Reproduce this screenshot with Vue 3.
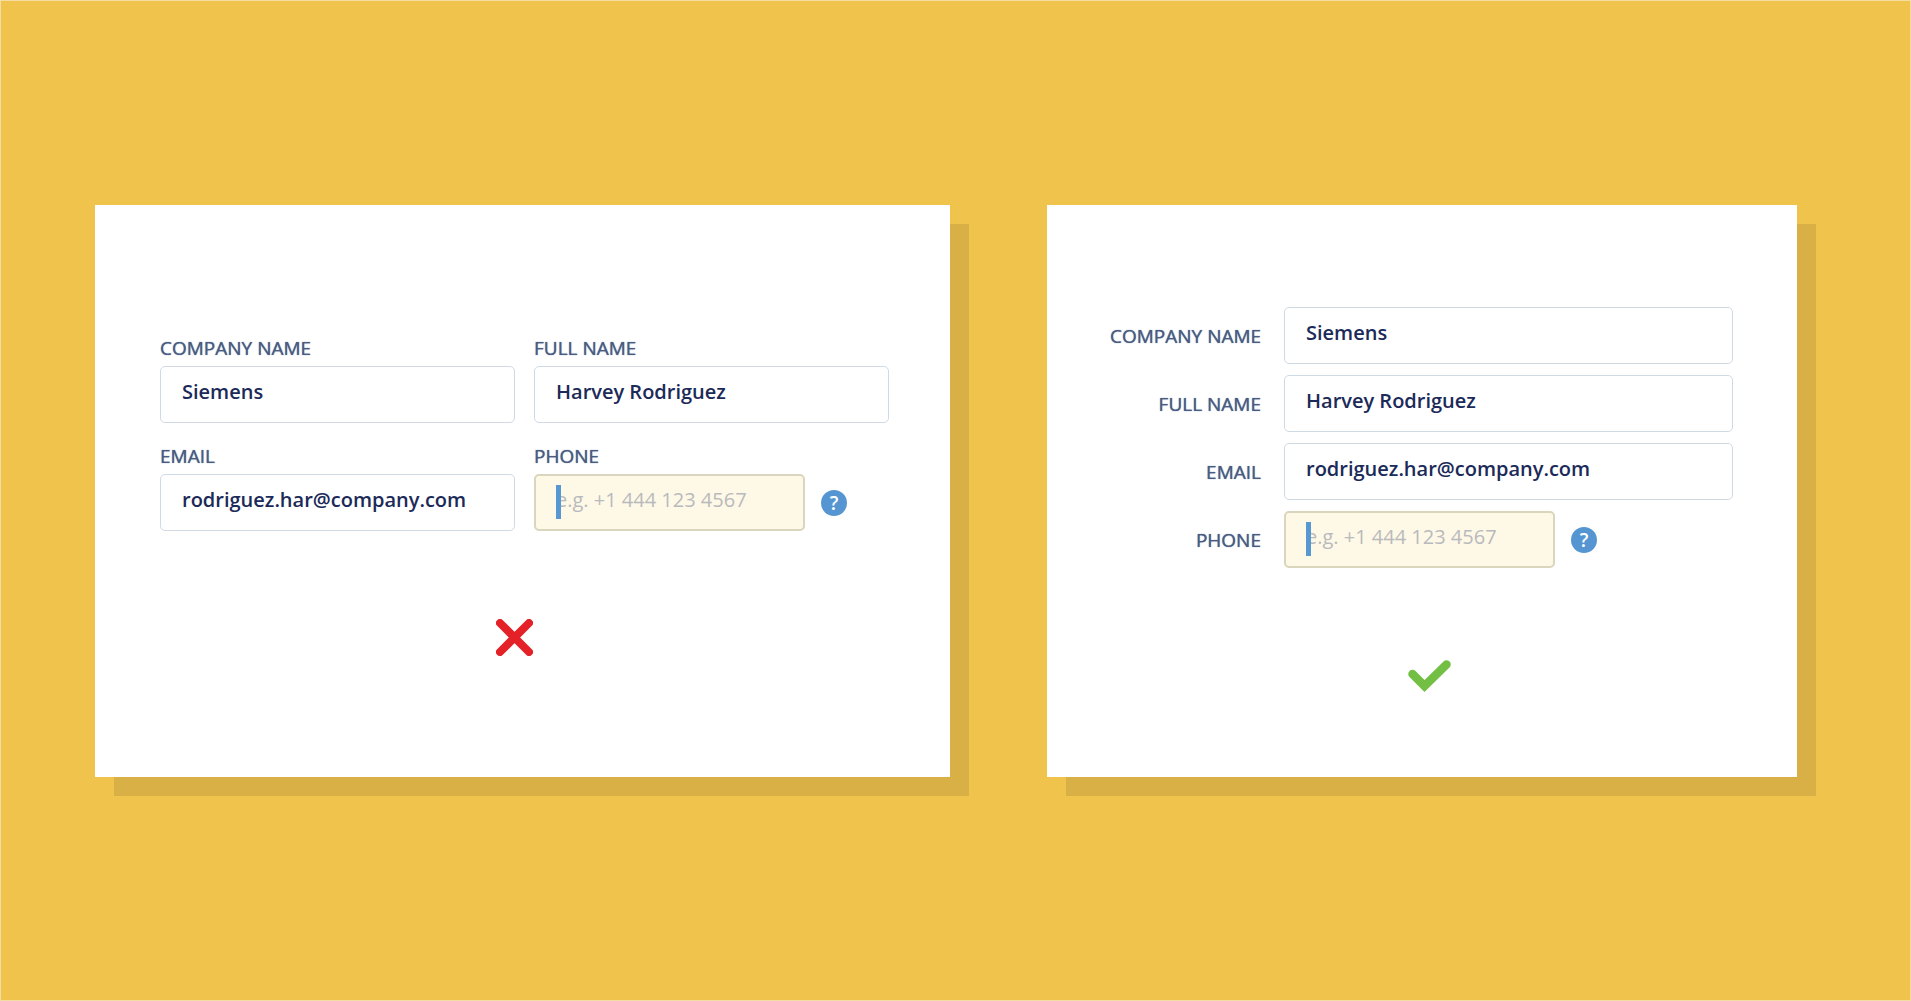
<script setup>
import { ref } from 'vue'

const fields = ref([
  { key: 'company', label: 'COMPANY NAME', type: 'text', value: 'Siemens' },
  { key: 'name', label: 'FULL NAME', type: 'text', value: 'Harvey Rodriguez' },
  { key: 'email', label: 'EMAIL', type: 'email', value: 'rodriguez.har@company.com' },
  { key: 'phone', label: 'PHONE', type: 'tel', value: '', placeholder: 'e.g. +1 444 123 4567', active: true },
])

const cards = [
  { id: 'columns', verdict: 'wrong' },
  { id: 'stacked', verdict: 'right' },
]
</script>

<template>
  <main class="page">
    <section v-for="card in cards" :key="card.id" class="card" :class="card.id">
      <form class="form" autocomplete="off" @submit.prevent>
        <div v-for="field in fields" :key="field.key" class="field">
          <label class="label" :for="card.id + '-' + field.key">{{ field.label }}</label>
          <div class="control">
            <div class="box" :class="{ active: field.active }">
              <input
                :id="card.id + '-' + field.key"
                v-model="field.value"
                class="input"
                :type="field.type"
                :placeholder="field.placeholder"
                spellcheck="false"
              />
              <span v-if="field.active" class="caret"></span>
            </div>
            <button v-if="field.active" class="help" type="button">?</button>
          </div>
        </div>
      </form>
      <div class="verdict">
        <svg v-if="card.verdict === 'wrong'" width="37" height="37" viewBox="0 0 37 37" aria-hidden="true">
          <path d="M4 4 33 33M33 4 4 33" fill="none" stroke="#e52128" stroke-width="8" stroke-linecap="round" />
        </svg>
        <svg v-else width="43" height="32" viewBox="0 0 43 32" aria-hidden="true">
          <path d="M4.500 14 16.500 26 38.500 4.500" fill="none" stroke="#73bf44" stroke-width="8.500" stroke-linecap="round" />
        </svg>
      </div>
    </section>
  </main>
</template>

<style>
body {
  margin: 0;
}
</style>

<style scoped>
.page {
  box-sizing: border-box;
  min-height: 100vh;
  padding: 204px 113px 204px 94px;
  border: 1px solid #f4dda2;
  background: #f0c44c;
  display: grid;
  grid-template-columns: 855fr 750fr;
  align-items: start;
  gap: 97px;
  font-family: "Open Sans", "Noto Sans", sans-serif;
}
.card {
  box-sizing: border-box;
  min-width: 0;
  min-height: 572px;
  background: #fff;
  box-shadow: 19px 19px 0 #d8b045;
}
.columns {
  padding: 131px 61px 0 65px;
}
.stacked {
  padding: 102px 64px 0 63px;
}
.form {
  display: grid;
}
.columns .form {
  grid-template-columns: 1fr 1fr;
  gap: 21px 19px;
}
.stacked .form {
  gap: 11px;
}
.field {
  min-width: 0;
}
.columns .field {
  display: flex;
  flex-direction: column;
  gap: 6px;
}
.stacked .field {
  display: grid;
  grid-template-columns: 151px 1fr;
  gap: 23px;
  align-items: center;
}
.label {
  font-size: 19px;
  line-height: 24px;
  color: #4a5c82;
  text-shadow: 0 0 1px #4a5c82;
  white-space: nowrap;
}
.stacked .label {
  text-align: right;
}
.control {
  display: flex;
  align-items: center;
  gap: 16px;
}
.box {
  position: relative;
  flex: 1;
  min-width: 0;
}
.box.active {
  flex: 0 1 271px;
}
.input {
  box-sizing: border-box;
  display: block;
  width: 100%;
  height: 57px;
  margin: 0;
  padding: 0 21px 6px;
  border: 1px solid #d0dae5;
  border-radius: 5px;
  outline: none;
  background: #fff;
  color: #1b2a58;
  font-family: inherit;
  font-size: 20px;
  font-weight: 600;
}
.active .input {
  padding: 0 20px 6px;
  border: 2px solid #d9d6bd;
  background: #fef8e6;
  font-weight: 400;
}
.input::placeholder {
  color: #b9babd;
  opacity: 1;
}
.caret {
  position: absolute;
  left: 22px;
  top: 11px;
  width: 5px;
  height: 34px;
  background: #5797d2;
}
.help {
  width: 26px;
  height: 26px;
  padding: 0;
  border: 0;
  border-radius: 50%;
  background: #5596d2;
  color: #fff;
  font-family: inherit;
  font-size: 19px;
  line-height: 24px;
  font-weight: 600;
}
.verdict {
  display: flex;
  justify-content: center;
}
.columns .verdict {
  margin-top: 88px;
  padding-right: 20px;
}
.stacked .verdict {
  margin-top: 92px;
  padding-left: 16px;
}
</style>
